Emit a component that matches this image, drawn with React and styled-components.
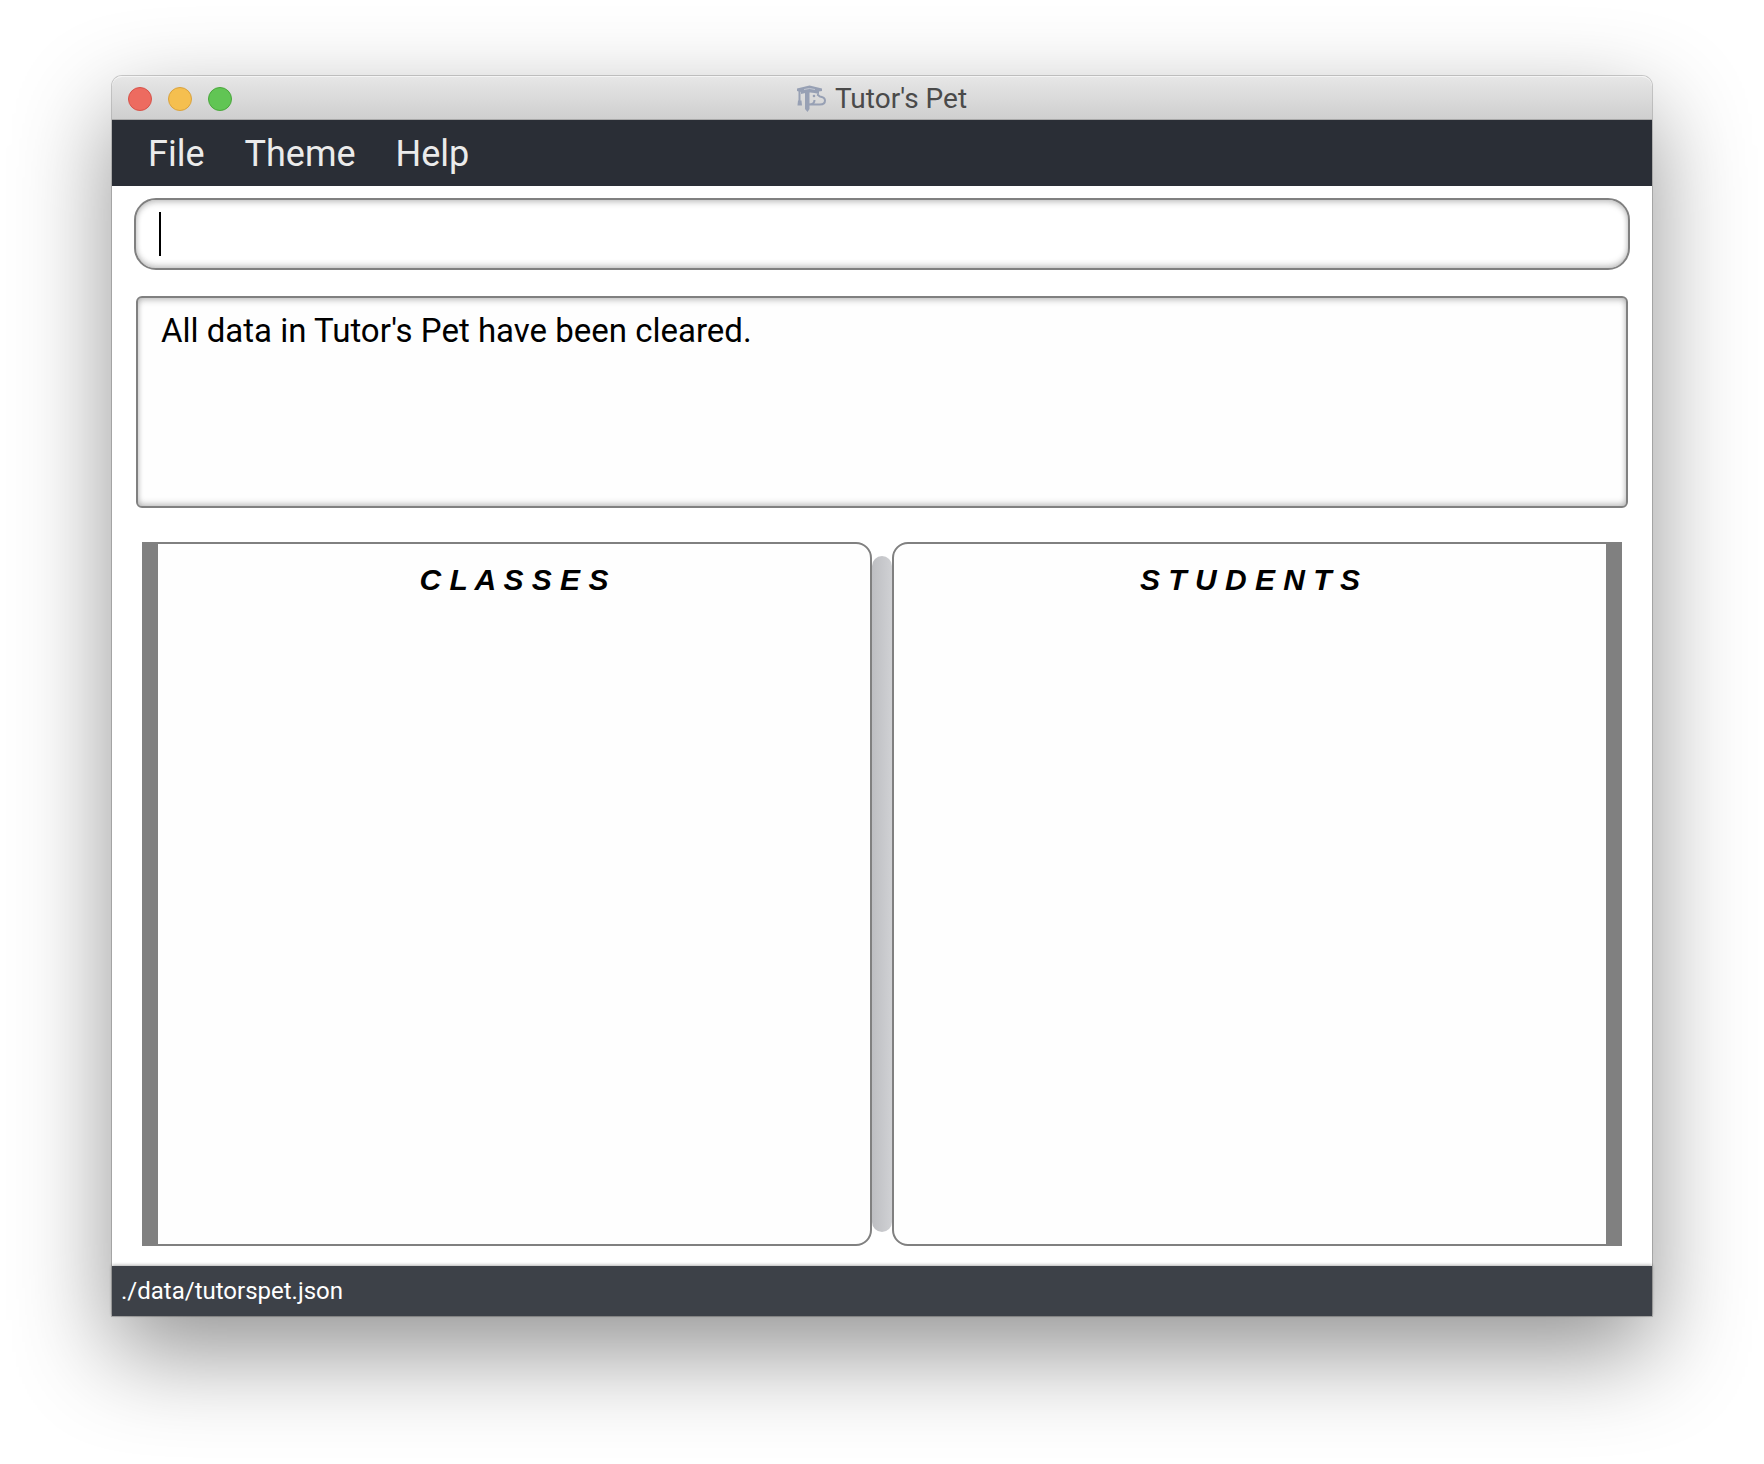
import React from "react";
import styled, { createGlobalStyle } from "styled-components";

const UI = `Roboto, Inter, "Liberation Sans", sans-serif`;

const GlobalStyle = createGlobalStyle`
  *, *::before, *::after { box-sizing: border-box; }
  html, body, #root { height: 100%; }
  body { margin: 0; background: #fff; font-family: ${UI}; }
`;

const Desktop = styled.div`
  display: flex;
  min-height: 100%;
  padding: 76px 112px 148px;
`;

const Window = styled.main`
  flex: 1;
  min-width: 0;
  display: flex;
  flex-direction: column;
  background: #fff;
  border-radius: 10px 10px 0 0;
  box-shadow: 0 0 0 1px rgba(0, 0, 0, 0.18), 0 36px 96px rgba(0, 0, 0, 0.43);
`;

const TitleBar = styled.header`
  display: grid;
  grid-template-columns: 1fr auto 1fr;
  align-items: center;
  height: 44px;
  padding: 1px 16px 0;
  border-radius: 10px 10px 0 0;
  border-top: 1px solid #f4f4f4;
  border-bottom: 1px solid #a9a9a9;
  background: linear-gradient(#e6e6e6, #cfcfcf);
`;

const Lights = styled.div`
  display: flex;
  gap: 16px;
`;

const Light = styled.button`
  width: 24px;
  height: 24px;
  padding: 0;
  border: 1px solid ${(p) => p.$edge};
  border-radius: 50%;
  background: ${(p) => p.$fill};
`;

const Title = styled.h1`
  display: flex;
  align-items: center;
  gap: 8px;
  margin: 0;
  color: #4a4a4a;
  font: 400 28px/32px ${UI};
`;

const MenuBar = styled.nav`
  display: flex;
  align-items: center;
  gap: 8px;
  height: 66px;
  padding: 2px 20px 0;
  background: #2a2e36;
`;

const MenuButton = styled.button`
  padding: 0 16px;
  border: 0;
  background: none;
  color: #ebebeb;
  font: 400 36px/44px ${UI};
`;

const Content = styled.div`
  flex: 1;
  display: flex;
  flex-direction: column;
  padding: 12px 22px 20px;
`;

const FIELD_SHADOW = "inset 0 4px 7px -2px rgba(0, 0, 0, 0.2), inset 0 -4px 7px -2px rgba(0, 0, 0, 0.2), inset 0 0 6px rgba(0, 0, 0, 0.12)";

const CommandBox = styled.label`
  display: flex;
  align-items: center;
  height: 72px;
  padding: 0 23px;
  border: 2px solid #808080;
  border-radius: 22px;
  box-shadow: ${FIELD_SHADOW};
`;

const Caret = styled.span`
  width: 2px;
  height: 44px;
  background: #000;
`;

const CommandInput = styled.input`
  flex: 1;
  min-width: 0;
  height: 44px;
  padding: 0;
  border: 0;
  outline: 0;
  background: none;
  caret-color: transparent;
  color: #000;
  font: 400 33px/40px ${UI};
`;

const Result = styled.textarea`
  display: block;
  height: 212px;
  margin: 26px 2px 34px;
  padding: 13px 23px;
  border: 2px solid #808080;
  border-radius: 6px;
  outline: 0;
  resize: none;
  background: #fefefe;
  box-shadow: ${FIELD_SHADOW};
  color: #000;
  font: 400 33px/40px ${UI};
`;

const Split = styled.div`
  flex: 1;
  display: grid;
  grid-template-columns: 1fr 20px 1fr;
  padding: 0 8px;
`;

const Panel = styled.section`
  border: 2px solid #808080;
  background: #fefefe;
  ${(p) => (p.$side === "left"
    ? "border-left-width: 16px; border-radius: 0 16px 16px 0;"
    : "border-right-width: 16px; border-radius: 16px 0 0 16px;")}
`;

const PanelTitle = styled.h2`
  margin: 0;
  padding-top: 18px;
  color: #000;
  text-align: center;
  font: italic 700 30px/36px "Liberation Sans", Arial, sans-serif;
`;

const Divider = styled.div`
  margin: 14px 0;
  border-radius: 10px;
  background: linear-gradient(90deg, #bdbec2, #d0d1d4);
`;

const StatusBar = styled.footer`
  height: 50px;
  padding: 0 9px;
  background: #3d4148;
  box-shadow: 0 -1px 3px rgba(0, 0, 0, 0.3);
  color: #fff;
  font: 400 24px/50px ${UI};
`;

function Logo() {
  return (
    <svg width="30" height="28" viewBox="0 0 30 28" fill="none" aria-hidden="true">
      <path d="M0 3.500 12.500 .500 25 3.500V6l-3 .500V9q-9-3-18 0V7L0 6z" fill="#97a0b4" />
      <path d="M7 4.500 12.500 3.500 18 4.500" stroke="#c3c8d2" strokeWidth="1" />
      <path d="M2.500 6v11" stroke="#97a0b4" strokeWidth="2" />
      <path d="M1 15.500h3.500l.5 5H.5z" fill="#97a0b4" />
      <path d="M8 7h4.500v17l-2 3-2.500-3z" fill="#97a0b4" />
      <path d="M20 9.500c1.500.500 2 1.500 3 2 3 .500 5 1.500 5 4 0 2.500-2 4-5 4H12c4 0 5.500-2 5.500-4.500" stroke="#97a0b4" strokeWidth="2" />
      <circle cx="17" cy="11" r="1.300" fill="#97a0b4" />
    </svg>
  );
}

export default function App() {
  return (
    <>
      <GlobalStyle />
      <Desktop>
        <Window>
          <TitleBar>
            <Lights>
              <Light aria-label="Close" $fill="#ed6b60" $edge="#d6534a" />
              <Light aria-label="Minimize" $fill="#f5bf4f" $edge="#d9a23e" />
              <Light aria-label="Zoom" $fill="#61c554" $edge="#4aa73c" />
            </Lights>
            <Title>
              <Logo />
              Tutor's Pet
            </Title>
          </TitleBar>
          <MenuBar>
            {["File", "Theme", "Help"].map((name) => (
              <MenuButton key={name}>{name}</MenuButton>
            ))}
          </MenuBar>
          <Content>
            <CommandBox>
              <Caret />
              <CommandInput aria-label="Command" />
            </CommandBox>
            <Result aria-label="Result" readOnly value="All data in Tutor's Pet have been cleared." />
            <Split>
              <Panel $side="left">
                <PanelTitle>C L A S S E S</PanelTitle>
              </Panel>
              <Divider role="separator" aria-orientation="vertical" />
              <Panel $side="right">
                <PanelTitle>S T U D E N T S</PanelTitle>
              </Panel>
            </Split>
          </Content>
          <StatusBar>./data/tutorspet.json</StatusBar>
        </Window>
      </Desktop>
    </>
  );
}
